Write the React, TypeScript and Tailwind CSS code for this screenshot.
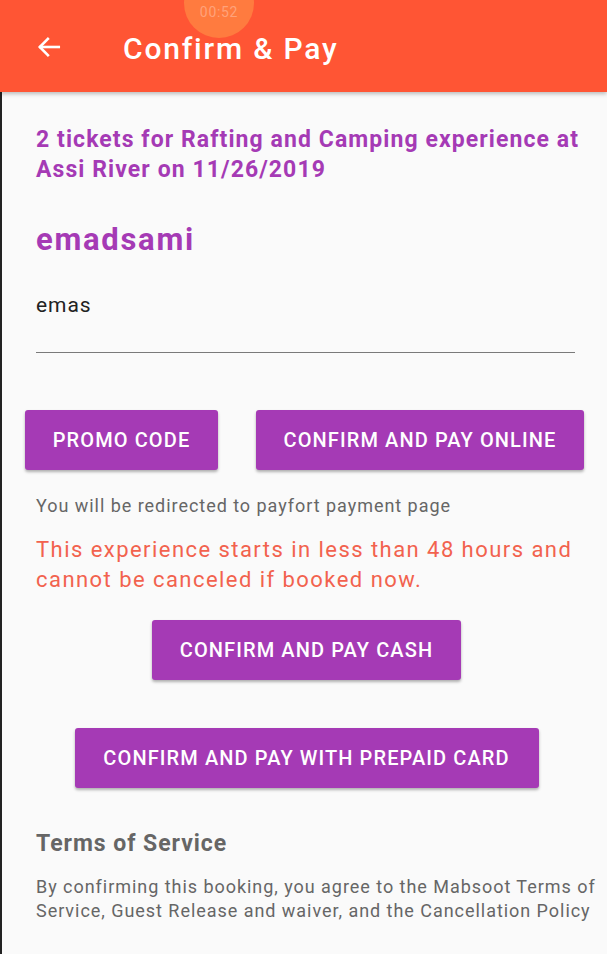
import React from "react";

export default function App() {
  const btn =
    "bg-[#a53ab5] text-white text-[20px] font-medium uppercase tracking-[0.055em] rounded-[3px] h-[60px] flex items-center justify-center shadow-[0_2px_3px_rgba(0,0,0,0.3)]";
  return (
    <div
      className="w-[607px] h-[954px] bg-[#fafafa] overflow-hidden relative"
      style={{ fontFamily: "Roboto, 'Noto Sans', sans-serif" }}
    >
      {/* Header */}
      <div className="relative h-[92px] bg-[#ff5534] flex items-center shadow-[0_2px_4px_rgba(0,0,0,0.25)] z-10 overflow-hidden">
        <div className="absolute left-[184px] top-[-32px] w-[70px] h-[70px] rounded-full bg-[#ff7b3f] flex items-center justify-center pt-[18px]">
          <span className="text-[14px] text-[#ffa27a] tracking-wider">00:52</span>
        </div>
        <svg
          className="ml-[36px] mt-[2px]"
          width="26"
          height="26"
          viewBox="0 0 24 24"
          fill="none"
          stroke="white"
          strokeWidth="2.4"
          strokeLinecap="square"
        >
          <path d="M21 12H4" />
          <path d="M11 4.5L3.5 12L11 19.5" />
        </svg>
        <div className="relative ml-[61px] mt-[4px] text-white text-[30px] font-medium tracking-[0.06em]">
          Confirm &amp; Pay
        </div>
      </div>

      {/* Body */}
      <div className="border-l-2 border-[#222] h-full tracking-[0.06em]">
        <div className="pl-[34px] pr-[6px] pt-[33px]">
          <div className="text-[#a53ab5] text-[23px] font-bold leading-[30px] tracking-[0.047em]">
            2 tickets for Rafting and Camping experience at Assi River on 11/26/2019
          </div>
          <div className="mt-[37px] text-[#a53ab5] text-[31px] font-bold leading-[36px] tracking-[0.055em]">
            emadsami
          </div>
          <div className="mt-[34px] mr-[26px] border-b border-[#7a7a7a] pb-[34px]">
            <div className="text-[21px] text-[#222] leading-[26px]">emas</div>
          </div>
        </div>

        <div className="flex pl-[23px] mt-[57px] gap-[38px]">
          <div className={`${btn} w-[193px]`}>Promo Code</div>
          <div className={`${btn} w-[328px]`}>Confirm and Pay Online</div>
        </div>

        <div className="pl-[34px] pr-[6px]">
          <div className="mt-[24px] text-[18px] text-[#666] leading-[24px]">
            You will be redirected to payfort payment page
          </div>
          <div className="mt-[17px] text-[22px] text-[#f2624e] leading-[30px] tracking-[0.066em]">
            This experience starts in less than 48 hours and cannot be canceled if booked now.
          </div>
        </div>

        <div className="flex justify-center pl-[4px] mt-[25px]">
          <div className={`${btn} w-[309px]`}>Confirm and Pay Cash</div>
        </div>
        <div className="flex justify-center mt-[48px] pl-[4px]">
          <div className={`${btn} w-[464px]`}>Confirm and Pay with Prepaid Card</div>
        </div>

        <div className="pl-[34px] pr-[2px]">
          <div className="mt-[42px] text-[23px] font-bold text-[#666] leading-[28px]">
            Terms of Service
          </div>
          <div className="mt-[17px] text-[18px] text-[#666] leading-[24px]">
            By confirming this booking, you agree to the Mabsoot Terms of Service, Guest Release and waiver, and the Cancellation Policy
          </div>
        </div>
      </div>
    </div>
  );
}
